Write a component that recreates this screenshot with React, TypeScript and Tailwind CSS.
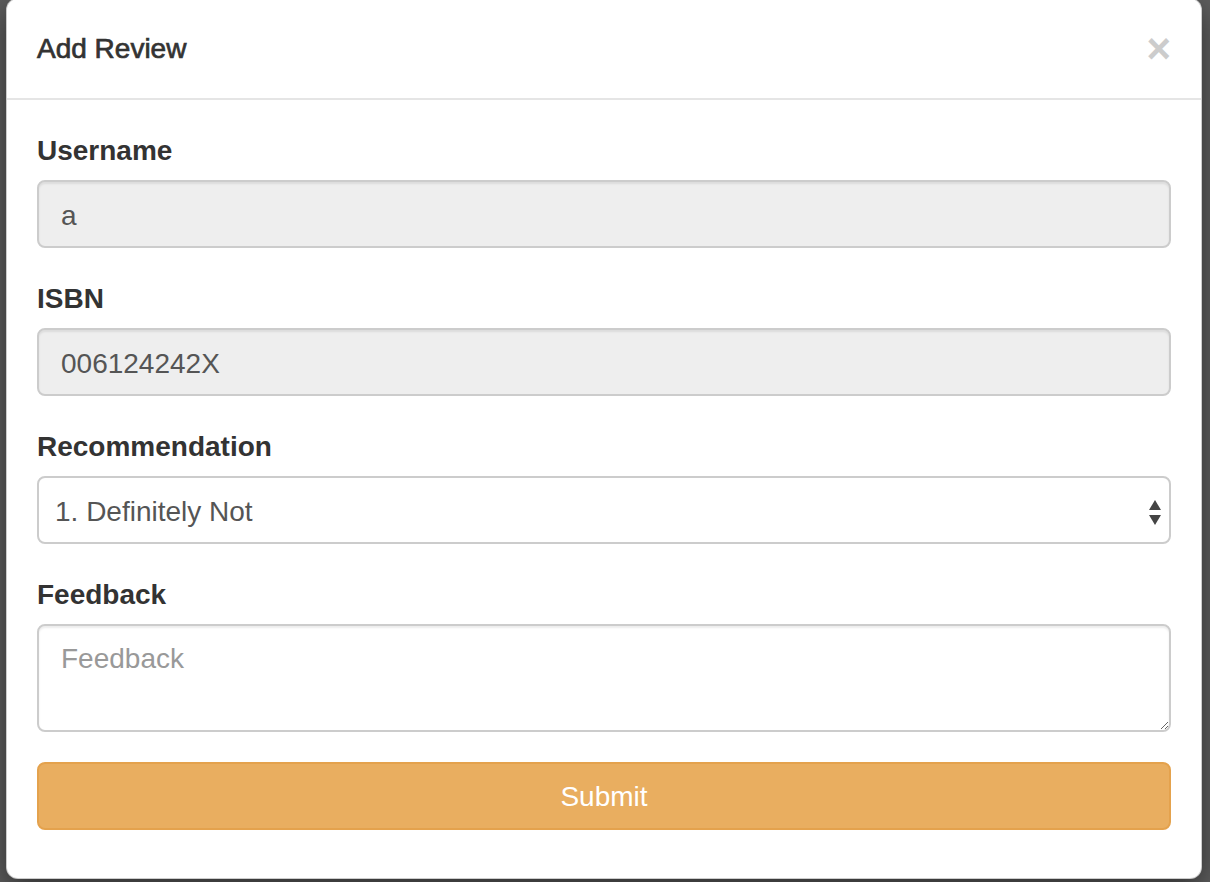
import React from "react";

const labelCls =
  "block text-[28px] leading-[40px] font-bold text-[#333333] pt-[1px] mb-[9px]";
const readonlyInput =
  "w-full h-[68px] rounded-[8px] border-2 border-[#cccccc] bg-[#eeeeee] px-[22px] pt-[3px] text-[28px] text-[#555555] shadow-[inset_0_2px_2px_rgba(0,0,0,0.075)] outline-none";

const SelectArrows = () => (
  <svg width="14" height="26" viewBox="0 0 14 26" className="shrink-0 mt-[2px]">
    <path d="M7 0 L13 10 L1 10 Z" fill="#444444" />
    <path d="M1 15 L13 15 L7 25 Z" fill="#444444" />
  </svg>
);

export default function App() {
  return (
    <div
      className="w-[1210px] h-[882px] overflow-hidden bg-[#5e5e5e]"
      style={{ fontFamily: '"Liberation Sans", Arial, sans-serif' }}
    >
      <div className="pl-[6px] pr-[8px]">
        <div className="-mt-[2px] w-[1196px] rounded-[12px] border border-[rgba(0,0,0,0.2)] bg-white shadow-[0_10px_30px_rgba(0,0,0,0.5)]">
          {/* header */}
          <div className="h-[101px] flex items-center justify-between pl-[30px] pr-[30px] border-b-2 border-[#e5e5e5]">
            <h4 className="text-[28px] leading-[40px] text-[#333333] [-webkit-text-stroke:0.7px_#333333]">
              Add Review
            </h4>
            <button className="text-[42px] leading-none font-bold text-[#cccccc]">
              ×
            </button>
          </div>

          {/* body */}
          <div className="px-[30px] pt-[30px] pb-[48px]">
            <div className="mb-[30px]">
              <label className={labelCls}>Username</label>
              <input className={readonlyInput} value="a" readOnly />
            </div>

            <div className="mb-[30px]">
              <label className={labelCls}>ISBN</label>
              <input className={readonlyInput} value="006124242X" readOnly />
            </div>

            <div className="mb-[30px]">
              <label className={labelCls}>Recommendation</label>
              <div className="w-full h-[68px] rounded-[8px] border-2 border-[#cccccc] bg-white pl-[16px] pr-[7px] pt-[3px] flex items-center justify-between text-[28px] text-[#555555]">
                <span>1. Definitely Not</span>
                <SelectArrows />
              </div>
            </div>

            <div className="mb-[30px]">
              <label className={labelCls}>Feedback</label>
              <textarea
                className="block w-full h-[108px] rounded-[8px] border-2 border-[#cccccc] bg-white px-[22px] pt-[13px] text-[28px] leading-[40px] text-[#555555] placeholder:text-[#999999] shadow-[inset_0_2px_2px_rgba(0,0,0,0.075)] outline-none resize-y"
                placeholder="Feedback"
              />
            </div>

            <button className="w-full h-[68px] rounded-[8px] border-2 border-[#e4a24d] bg-[#e9ae60] pt-[2px] text-white text-[28px]">
              Submit
            </button>
          </div>
        </div>
      </div>
    </div>
  );
}
